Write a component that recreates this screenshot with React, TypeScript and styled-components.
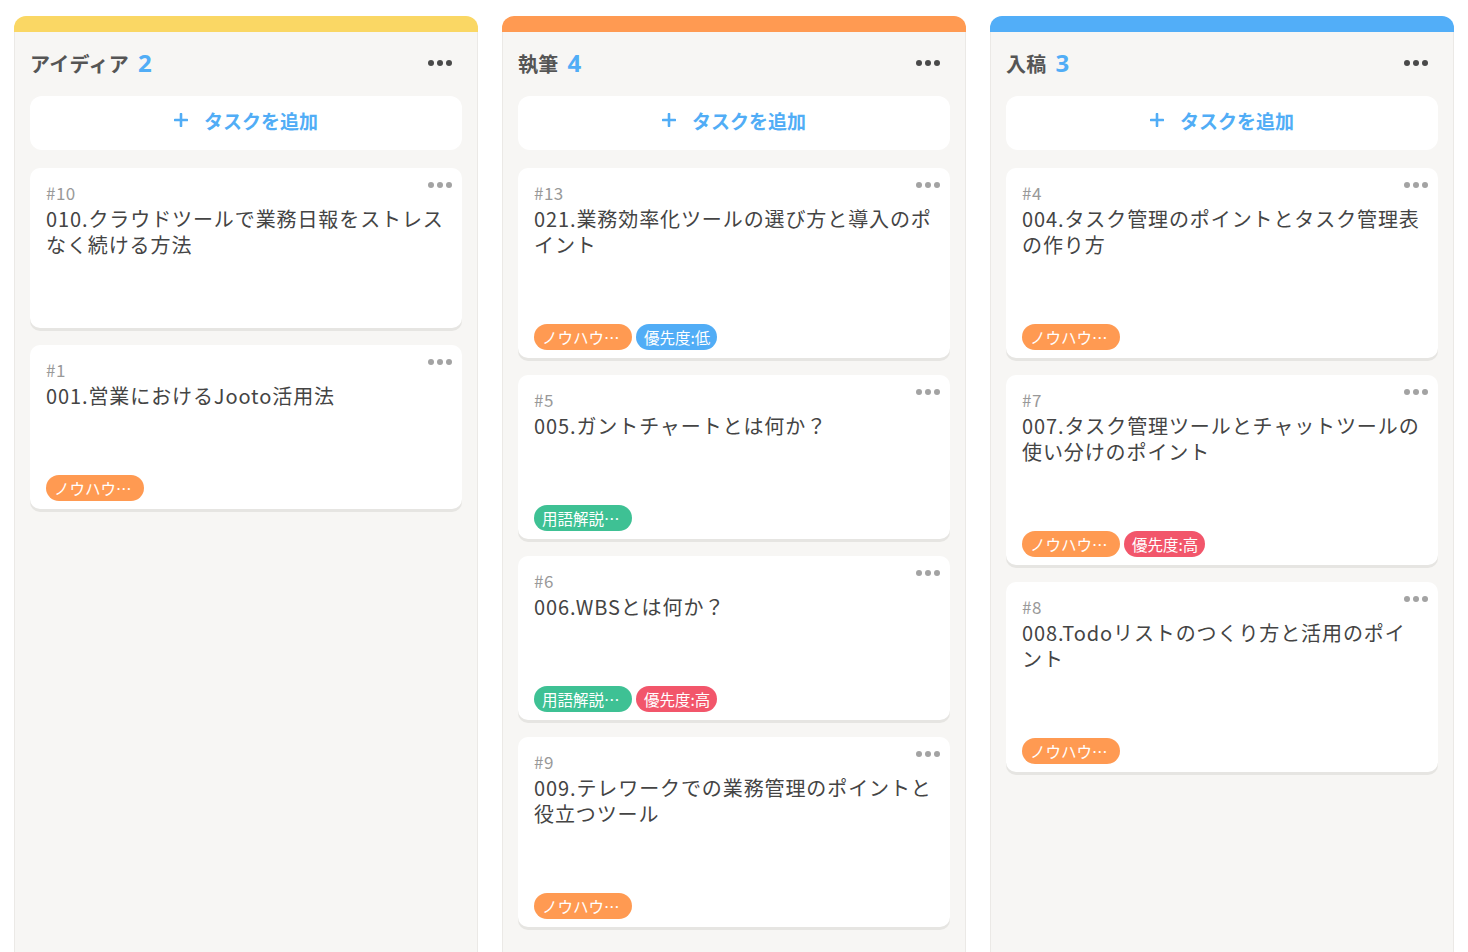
import React from "react";
import styled, { createGlobalStyle } from "styled-components";

const GlobalStyle = createGlobalStyle`
  html, body {
    margin: 0;
    padding: 0;
    background: #ffffff;
    height: 100%;
    overflow: hidden;
  }
  body {
    font-family: "Noto Sans CJK JP", "Noto Sans", sans-serif;
    color: #444;
  }
  * { box-sizing: border-box; }
`;

const BLUE = "#51adf6";

type TagKind = "knowhow" | "term" | "low" | "high";

interface Task {
  id: number;
  title: string;
  tags: TagKind[];
}

interface ColumnData {
  name: string;
  color: string;
  tasks: Task[];
}

const columns: ColumnData[] = [
  {
    name: "アイディア",
    color: "#fad764",
    tasks: [
      { id: 10, title: "010.クラウドツールで業務日報をストレス\nなく続ける方法", tags: [] },
      { id: 1, title: "001.営業におけるJooto活用法", tags: ["knowhow"] },
    ],
  },
  {
    name: "執筆",
    color: "#ff9a52",
    tasks: [
      { id: 13, title: "021.業務効率化ツールの選び方と導入のポ\nイント", tags: ["knowhow", "low"] },
      { id: 5, title: "005.ガントチャートとは何か？", tags: ["term"] },
      { id: 6, title: "006.WBSとは何か？", tags: ["term", "high"] },
      { id: 9, title: "009.テレワークでの業務管理のポイントと\n役立つツール", tags: ["knowhow"] },
    ],
  },
  {
    name: "入稿",
    color: "#52aef8",
    tasks: [
      { id: 4, title: "004.タスク管理のポイントとタスク管理表\nの作り方", tags: ["knowhow"] },
      { id: 7, title: "007.タスク管理ツールとチャットツールの\n使い分けのポイント", tags: ["knowhow", "high"] },
      { id: 8, title: "008.Todoリストのつくり方と活用のポイ\nント", tags: ["knowhow"] },
    ],
  },
];

const tagInfo: Record<TagKind, { label: string; bg: string; clipped: boolean }> = {
  knowhow: { label: "ノウハウ…", bg: "#ff9a52", clipped: true },
  term: { label: "用語解説…", bg: "#3ec194", clipped: true },
  low: { label: "優先度:低", bg: "#51adf6", clipped: false },
  high: { label: "優先度:高", bg: "#f2566b", clipped: false },
};

const Board = styled.div`
  display: flex;
  gap: 24px;
  padding: 16px 14px 0;
  height: 100vh;
`;

const Column = styled.section`
  width: 464px;
  flex: 0 0 464px;
  display: flex;
  flex-direction: column;
  height: calc(100vh + 20px);
`;

const ColorBar = styled.div<{ $color: string }>`
  height: 16px;
  background: ${(p) => p.$color};
  border-radius: 12px 12px 0 0;
`;

const ColumnBody = styled.div`
  flex: 1;
  background: #f7f6f4;
  border: 1px solid #ebe9e6;
  border-top: none;
  padding: 0 15px;
`;

const Header = styled.header`
  height: 60px;
  margin-bottom: 4px;
  display: flex;
  align-items: center;
  justify-content: space-between;
  padding-right: 10px;
  padding-top: 1px;
`;

const Title = styled.h2`
  margin: 0;
  font-size: 20px;
  font-weight: 700;
  color: #555;
  display: flex;
  align-items: baseline;
  gap: 9px;
  letter-spacing: 0.3px;
`;

const Count = styled.span`
  color: ${BLUE};
  font-size: 24px;
  font-family: "Noto Sans", "Liberation Sans", sans-serif;
  font-weight: 700;
`;

const Dots = styled.div<{ $color: string }>`
  display: flex;
  gap: 3px;
  span {
    width: 6px;
    height: 6px;
    border-radius: 50%;
    background: ${(p) => p.$color};
  }
`;

const CardDots = styled(Dots)`
  position: absolute;
  top: 14px;
  right: 10px;
`;

const AddButton = styled.button`
  width: 100%;
  height: 54px;
  border: none;
  border-radius: 12px;
  background: #fff;
  color: ${BLUE};
  font-family: inherit;
  font-size: 19px;
  font-weight: 700;
  display: flex;
  align-items: center;
  justify-content: center;
  gap: 16px;
  padding: 0 0 6px;
  margin-bottom: 18px;
  cursor: pointer;
`;

const CardList = styled.div`
  display: flex;
  flex-direction: column;
  gap: 17px;
`;

const Card = styled.article`
  position: relative;
  background: #fff;
  border-radius: 10px;
  box-shadow: 0 3px 0 #e6e5e2;
  padding: 12px 16px 8px;
`;

const TaskId = styled.div`
  font-size: 17px;
  line-height: 26px;
  color: #999;
  letter-spacing: 0.5px;
`;

const TaskTitle = styled.div`
  font-size: 20px;
  line-height: 26px;
  color: #444;
  white-space: pre-line;
  letter-spacing: 0.9px;
`;

const Spacer = styled.div`
  height: 62px;
`;

const Tags = styled.div`
  display: flex;
  gap: 4px;
  margin-top: 4px;
`;

const Tag = styled.span<{ $bg: string; $clipped: boolean }>`
  display: inline-block;
  height: 26px;
  line-height: 26px;
  width: ${(p) => (p.$clipped ? "98px" : "auto")};
  padding: 0 7px 0 8px;
  border-radius: 13px;
  background: ${(p) => p.$bg};
  color: #fff;
  font-size: 15.5px;
  white-space: nowrap;
`;

const ThreeDots = ({ color, card }: { color: string; card?: boolean }) => {
  const Comp = card ? CardDots : Dots;
  return (
    <Comp $color={color}>
      <span />
      <span />
      <span />
    </Comp>
  );
};

const PlusIcon = () => (
  <svg width="14" height="14" viewBox="0 0 14 14" aria-hidden="true">
    <path d="M7 1v12M1 7h12" stroke={BLUE} strokeWidth="2.6" strokeLinecap="round" />
  </svg>
);

const TaskCard = ({ task }: { task: Task }) => (
  <Card>
    <ThreeDots color="#a3a3a3" card />
    <TaskId>#{task.id}</TaskId>
    <TaskTitle>{task.title}</TaskTitle>
    <Spacer />
    {task.tags.length > 0 && (
      <Tags>
        {task.tags.map((t) => (
          <Tag key={t} $bg={tagInfo[t].bg} $clipped={tagInfo[t].clipped}>
            {tagInfo[t].label}
          </Tag>
        ))}
      </Tags>
    )}
  </Card>
);

export default function App() {
  return (
    <>
      <GlobalStyle />
      <Board>
        {columns.map((col) => (
          <Column key={col.name}>
            <ColorBar $color={col.color} />
            <ColumnBody>
              <Header>
                <Title>
                  {col.name}
                  <Count>{col.tasks.length}</Count>
                </Title>
                <ThreeDots color="#4a4a4a" />
              </Header>
              <AddButton>
                <PlusIcon />
                タスクを追加
              </AddButton>
              <CardList>
                {col.tasks.map((t) => (
                  <TaskCard key={t.id} task={t} />
                ))}
              </CardList>
            </ColumnBody>
          </Column>
        ))}
      </Board>
    </>
  );
}
